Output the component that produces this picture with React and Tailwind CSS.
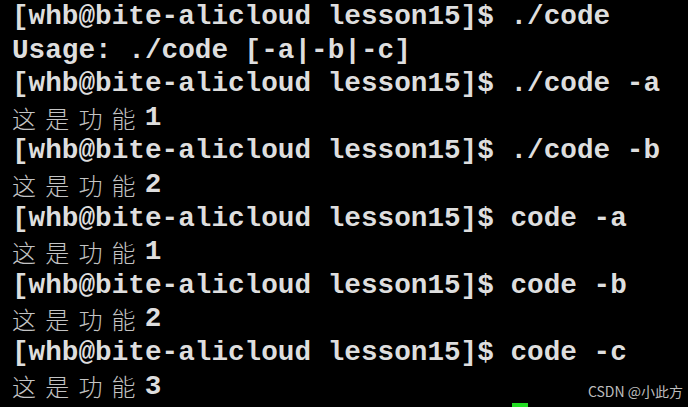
import React from "react";

function Cn({ text, n }) {
  return (
    <div className="flex h-[33.6px] items-center">
      {text.split("").map((c, i) => (
        <span
          key={i}
          className="inline-block w-[33.2px] text-[24px] font-light text-[#c4c4c4] font-['Noto_Sans_CJK_SC',sans-serif]"
        >
          {c}
        </span>
      ))}
      <span className="font-['Liberation_Mono',monospace] font-bold text-[27.7px] text-[#dedede]">{n}</span>
    </div>
  );
}

function Line({ children }) {
  return (
    <div className="h-[33.6px] leading-[33.6px] whitespace-pre font-['Liberation_Mono',monospace] font-bold text-[27.7px] text-[#dedede]">
      {children}
    </div>
  );
}

export default function App() {
  const prompt = "[whb@bite-alicloud lesson15]$ ";
  return (
    <div className="relative w-[688px] h-[407px] overflow-hidden bg-black pl-[12px]">
      <Line>{prompt + "./code"}</Line>
      <Line>{"Usage: ./code [-a|-b|-c]"}</Line>
      <Line>{prompt + "./code -a"}</Line>
      <Cn text="这是功能" n="1" />
      <Line>{prompt + "./code -b"}</Line>
      <Cn text="这是功能" n="2" />
      <Line>{prompt + "code -a"}</Line>
      <Cn text="这是功能" n="1" />
      <Line>{prompt + "code -b"}</Line>
      <Cn text="这是功能" n="2" />
      <Line>{prompt + "code -c"}</Line>
      <Cn text="这是功能" n="3" />
      <div className="absolute left-[512px] top-[403px] w-[16px] h-[6px] bg-[#22dd22]" />
      <div className="absolute right-[5px] top-[381px] text-[14px] text-[#bdbdbd] font-['Noto_Sans_CJK_SC',sans-serif]">
        CSDN @小此方
      </div>
    </div>
  );
}
